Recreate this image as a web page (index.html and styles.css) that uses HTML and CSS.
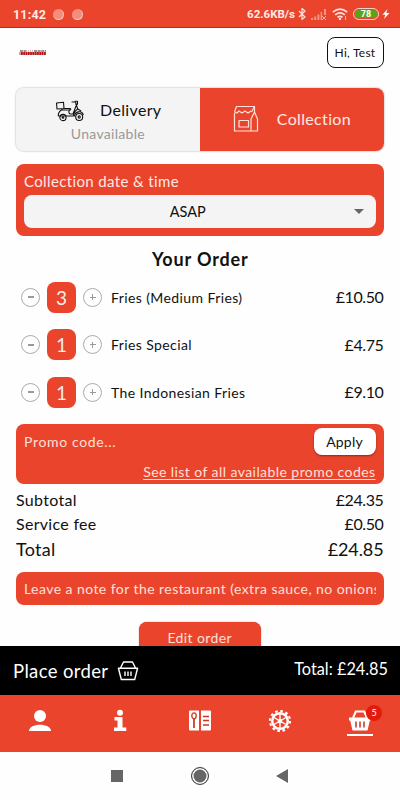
FILE: index.html
```html
<!DOCTYPE html>
<html lang="en">
<head>
<meta charset="UTF-8">
<meta name="viewport" content="width=device-width, initial-scale=1">
<title>Your Order</title>
<link rel="stylesheet" href="styles.css">
</head>
<body>
<div class="phone">
    <div class="status-bar">
        <span class="clock">11:42</span>
        <span class="dot"></span>
        <span class="dot"></span>
        <span class="speed">62.6KB/s</span>
        <svg class="bluetooth" viewBox="0 0 8 12"><path d="M1 3l6 6-3 2.5V.5L7 3 1 9" fill="none" stroke="#fde0da" stroke-width="1.2"/></svg>
        <svg class="signal" viewBox="0 0 16 11"><g fill="#f59482"><path d="M0 9h2v2H0zM3.200 7.500h2V11h-2zM6.400 5.500h2V11h-2zM9.600 3h1.500v8H9.600zM13 0h2v6h-2z"/></g><path d="M11 7l4 4M15 7l-4 4" stroke="#f8b0a2"/></svg>
        <svg class="wifi" viewBox="0 0 16 12"><g fill="none" stroke="#fde0da" stroke-width="1.700"><path d="M.8 4.200q7.200-6 14.400 0M3.200 6.900q4.800-4 9.600 0M5.500 9.400q2.500-2 5 0"/></g><circle cx="8" cy="11" r="1.200" fill="#fde0da"/><path d="M13.500 8v4" stroke="#f8b0a2"/></svg>
        <span class="battery"><span class="battery-level">78</span></span>
        <svg class="bolt" viewBox="0 0 8 10"><path d="M5.500 0L.5 5.800h2.800L2 10l5.500-6H4.300z" fill="#fff"/></svg>
    </div>

    <div class="content">
        <div class="header">
            <svg class="logo" viewBox="0 0 28 6">
                <path d="M1 1h6M15 1h12" stroke="#3c2626" stroke-width="1" stroke-dasharray="3 .6"/>
                <path d="M7 1h8" stroke="#c9756f" stroke-width="1" stroke-dasharray="1 1"/>
                <path d="M0 3.500h27" stroke="#e08c86" stroke-width="2.600"/>
                <path d="M2 3.500h25" stroke="#b3171d" stroke-width="2.800" stroke-dasharray="1.700 .6"/>
            </svg>
            <button class="user-btn">Hi, Test</button>
        </div>

        <div class="order-type">
            <div class="type-option delivery">
                <div class="type-row">
                    <svg class="scooter" viewBox="0 0 30 22">
                        <g fill="none" stroke="#111" stroke-width="1.100" stroke-linejoin="round" stroke-linecap="round">
                            <path d="M1.500 3l7-.8.5 6.300-7 .5zM9 8.500h6c1 0 1 1.300 0 1.500H7"/>
                            <path d="M7 9.500c-3 2-4 4-3.700 6.500H18.500c.3-3 2-5.500 4.200-7L20.500 2H17M14.500 10c-1.500 2.500 0 4 1 4h2.500L21 6"/>
                            <path d="M20 1.200h2.500v3h-1.500M22.700 9l3 1.800M19.500 16c.5-4.500 7-6 8.700-1.500"/>
                            <circle cx="8" cy="17.500" r="3.100"/><circle cx="24.200" cy="17" r="3.500"/>
                            <circle cx="8" cy="17.500" r=".8"/><circle cx="24.200" cy="17" r="1.100"/>
                        </g>
                    </svg>
                    <span class="type-name">Delivery</span>
                </div>
                <span class="unavailable">Unavailable</span>
            </div>
            <div class="type-option collection">
                <svg class="bag" viewBox="0 0 26 28">
                    <g fill="none" stroke="#fde3dc" stroke-width="1.200" stroke-linejoin="round">
                        <path d="M1.500 8v18h23V14L21.500 7 18 14v12M3.500 1.500h18V7M1.500 7l2-5.500"/>
                        <path d="M1.500 7l2.500 1 2-2 3 2 3-2 3 2 3-2M21.500 1.500L18.500 7M6 15.500h9.500v6.500H6z"/>
                    </g>
                </svg>
                <span class="type-name">Collection</span>
            </div>
        </div>

        <div class="date-box">
            <label class="date-label">Collection date &amp; time</label>
            <div class="date-select"><span>ASAP</span><i class="arrow"></i></div>
        </div>

        <h1 class="title">Your Order</h1>

        <div class="items">
            <div class="item">
                <button class="round minus"></button>
                <span class="qty">3</span>
                <button class="round plus"></button>
                <span class="item-name">Fries (Medium Fries)</span>
                <span class="price">£10.50</span>
            </div>
            <div class="item">
                <button class="round minus"></button>
                <span class="qty">1</span>
                <button class="round plus"></button>
                <span class="item-name">Fries Special</span>
                <span class="price">£4.75</span>
            </div>
            <div class="item">
                <button class="round minus"></button>
                <span class="qty">1</span>
                <button class="round plus"></button>
                <span class="item-name">The Indonesian Fries</span>
                <span class="price">£9.10</span>
            </div>
        </div>

        <div class="promo">
            <div class="promo-row">
                <span class="promo-input">Promo code...</span>
                <button class="apply">Apply</button>
            </div>
            <a class="promo-link">See list of all available promo codes</a>
        </div>

        <div class="totals">
            <div class="line"><span>Subtotal</span><span class="amount">£24.35</span></div>
            <div class="line"><span>Service fee</span><span class="amount">£0.50</span></div>
            <div class="line total"><span>Total</span><span class="amount">£24.85</span></div>
        </div>

        <div class="note"><div class="note-text">Leave a note for the restaurant (extra sauce, no onions</div></div>

        <button class="edit">Edit order</button>
    </div>

    <div class="place-order">
        <span class="place-label">Place order</span>
        <svg class="basket" viewBox="0 0 22 20">
            <g fill="none" stroke="#fff" stroke-width="1.400" stroke-linejoin="round">
                <path d="M.8 7.200h20.400M1.500 7.500l2.800 11h13.400l2.800-11M3.500 7l3-6h9l3 6M8 10.500V15M11 10.500V15M14 10.500V15"/>
            </g>
        </svg>
        <span class="place-total">Total: £24.85</span>
    </div>

    <div class="tabs">
        <div class="tab"><svg class="icon" viewBox="0 0 24 24"><g fill="#fff"><circle cx="12" cy="7" r="6"/><path d="M1 22c0-8.500 22-8.500 22 0z"/></g></svg></div>
        <div class="tab"><svg class="icon" viewBox="0 0 24 24"><g fill="#fff"><circle cx="12" cy="3.800" r="3"/><path d="M6.500 8h8v10.500h3.800V22H6v-3.500h3.500V11.500h-3z"/></g></svg></div>
        <div class="tab">
            <svg class="icon" viewBox="0 0 24 24">
                <path d="M1 2.500q0-1 1-1h9v20H2q-1 0-1-1zM13 1.500h9q1 0 1 1v18q0 1-1 1h-9z" fill="#fff"/>
                <ellipse cx="6" cy="6.800" rx="2.200" ry="3" fill="#fff" stroke="#c93420" stroke-width="1.300"/>
                <path d="M6 10v9M15 7.500h6M15 11.500h6M15 16h6" stroke="#c93420" stroke-width="1.700"/>
            </svg>
        </div>
        <div class="tab">
            <svg class="icon" viewBox="0 0 24 24">
                <g fill="none" stroke="#fff">
                    <circle cx="12" cy="12" r="10" stroke-width="2.200" stroke-dasharray="2.618 2.618"/>
                    <circle cx="12" cy="12" r="7.800" stroke-width="2.500"/>
                    <path d="M12 5v14M6 8.500l12 7M18 8.500l-12 7" stroke-width="1.400"/>
                </g>
                <circle cx="12" cy="12" r="2.300" fill="#fff"/>
            </svg>
        </div>
        <div class="tab active">
            <svg class="icon" viewBox="0 0 24 24">
                <path d="M5 9l2.800-6.500h8.400L19 9" fill="none" stroke="#fff" stroke-width="2"/>
                <path d="M1 8.500h22v3h-1.200L19.500 21.500h-15L2.200 11.500H1z" fill="#fff"/>
                <path d="M8 12.500v6M12 12.500v6M16 12.500v6" stroke="#c93420" stroke-width="1.500"/>
            </svg>
            <span class="badge">5</span>
        </div>
    </div>

    <div class="system-nav">
        <span class="square"></span>
        <span class="home"></span>
        <svg class="back" viewBox="0 0 12 14"><path d="M12 0v14L0 7z" fill="#666"/></svg>
    </div>
</div>
</body>
</html>
```
FILE: styles.css
```css
* {
    margin: 0;
    padding: 0;
    box-sizing: border-box;
}

body {
    background: #fefefe;
    color: #111;
    font-family: 'Lato', sans-serif;
}

button {
    border: none;
    background: none;
    font-family: inherit;
    color: inherit;
}

.phone {
    width: 400px;
    height: 800px;
    display: flex;
    flex-direction: column;
    overflow: hidden;
}

.status-bar {
    height: 28px;
    flex: none;
    background: #eb442c;
    border-bottom: 1px solid #b92a18;
    display: flex;
    align-items: center;
    padding: 1px 10px 0 13px;
    color: #fdeae6;
    font-family: 'Roboto', sans-serif;
    font-weight: bold;
}

.clock {
    width: 34px;
    margin-right: 6px;
    font-size: 12.5px;
    letter-spacing: 0.2px;
}

.dot {
    width: 11px;
    height: 11px;
    margin-right: 8px;
    border-radius: 50%;
    background: #f58d7d;
    border-right: 1px solid #fac5bb;
    border-bottom: 1px solid #fac5bb;
}

.speed {
    margin-left: auto;
    font-size: 11.5px;
}

.bluetooth {
    width: 8px;
    height: 12px;
    margin-left: 3px;
}

.signal {
    width: 16px;
    height: 11px;
    margin-left: 5px;
}

.wifi {
    width: 16px;
    height: 12px;
    margin-left: 5px;
}

.battery {
    width: 26px;
    height: 12px;
    margin-left: 5px;
    border: 1px solid #fbd3ca;
    border-radius: 6px;
    padding: 1px;
}

.battery-level {
    display: block;
    height: 8px;
    border-radius: 4px;
    background: #58a618;
    color: #fff;
    font-size: 9px;
    line-height: 9px;
    text-align: center;
}

.bolt {
    width: 8px;
    height: 10px;
    margin-left: 3px;
}

.content {
    height: 618px;
    flex: none;
    overflow: hidden;
    padding: 0 16.5px 0 16px;
    display: flex;
    flex-direction: column;
}

.header {
    height: 59.5px;
    flex: none;
    display: flex;
    justify-content: space-between;
    align-items: flex-start;
    padding: 9px 0 0 3px;
}

.logo {
    width: 28px;
    height: 6px;
    margin-top: 13px;
}

.user-btn {
    width: 57px;
    height: 31px;
    border: 1px solid #111;
    border-radius: 8px;
    background: #fff;
    font-size: 12px;
    letter-spacing: 0.25px;
}

.order-type {
    height: 63px;
    flex: none;
    display: flex;
    border-radius: 8px;
    overflow: hidden;
    box-shadow: 0 0 2px rgba(0, 0, 0, 0.4);
}

.type-option {
    width: 50%;
    display: flex;
    align-items: center;
}

.delivery {
    background: #f4f4f4;
    flex-direction: column;
    padding-top: 12px;
}

.collection {
    background: #eb442c;
    color: #fde9e4;
    padding-left: 33px;
}

.type-row {
    display: flex;
    align-items: center;
    height: 22px;
    align-self: flex-start;
    padding-left: 39px;
}

.scooter {
    width: 30px;
    height: 22px;
    margin-right: 15px;
}

.type-name {
    padding-bottom: 2px;
    font-size: 16px;
    letter-spacing: 0.35px;
}

.bag {
    width: 26px;
    height: 28px;
    margin-right: 18px;
}

.unavailable {
    color: #999;
    font-size: 14px;
    line-height: 18px;
    margin-top: 3px;
    letter-spacing: 0.3px;
}

.date-box {
    height: 71.5px;
    flex: none;
    margin-top: 13.5px;
    padding: 7px 8px;
    border-radius: 8px;
    background: #eb442c;
    color: #fde9e4;
}

.date-label {
    display: block;
    font-size: 15px;
    line-height: 20px;
    letter-spacing: 0.37px;
}

.date-select {
    height: 33px;
    margin-top: 4px;
    border-radius: 8px;
    background: #f4f4f4;
    color: #111;
    display: flex;
    align-items: center;
    justify-content: center;
    padding: 0 0 1px 48px;
    font-size: 14.5px;
}

.date-select span {
    flex: 1;
    text-align: center;
}

.arrow {
    margin: 1px 12px 0 50px;
    border: 5px solid transparent;
    border-top-color: #666;
    border-bottom: none;
}

.title {
    flex: none;
    margin-top: 12px;
    padding-left: 1px;
    font-size: 18px;
    line-height: 22px;
    text-align: center;
    letter-spacing: 0.85px;
}

.items {
    flex: none;
    margin-top: 4px;
}

.item {
    height: 47.5px;
    display: flex;
    align-items: center;
    padding-left: 5px;
}

.round {
    position: relative;
    width: 19px;
    height: 19px;
    border: 1px solid #aaa;
    border-radius: 50%;
}

.round::before {
    content: "";
    position: absolute;
    left: 5.5px;
    top: 7.5px;
    width: 6px;
    height: 2px;
    background: #999;
}

.plus::before {
    height: 1px;
    top: 8px;
}

.plus::after {
    content: "";
    position: absolute;
    left: 8px;
    top: 5.5px;
    width: 1px;
    height: 6px;
    background: #999;
}

.qty {
    width: 29px;
    height: 31px;
    margin: 0 7px;
    border-radius: 8px;
    background: #eb442c;
    color: #fdeeea;
    font-size: 19px;
    line-height: 31px;
    text-align: center;
}

.item-name {
    margin-left: 9px;
    font-size: 14px;
    letter-spacing: 0.4px;
}

.price {
    margin-left: auto;
    padding-bottom: 1px;
    font-size: 16px;
    letter-spacing: -0.4px;
}

.promo {
    height: 60px;
    flex: none;
    margin-top: 8px;
    padding: 4px 8px 0;
    border-radius: 8px;
    background: #eb442c;
    color: #fde0d9;
}

.promo-row {
    display: flex;
    justify-content: space-between;
    align-items: center;
    height: 27px;
}

.promo-input {
    padding-bottom: 1px;
    font-size: 14px;
    letter-spacing: 0.65px;
}

.apply {
    width: 62px;
    height: 27px;
    padding-bottom: 1px;
    border-radius: 8px;
    background: #fff;
    color: #111;
    font-size: 14px;
    letter-spacing: 0.2px;
    box-shadow: 0 1px 2px rgba(0, 0, 0, 0.4);
}

.promo-link {
    display: block;
    margin-top: 8px;
    font-size: 14px;
    line-height: 18px;
    letter-spacing: 0.43px;
    text-align: right;
    text-decoration: underline;
    text-underline-offset: 2px;
    white-space: nowrap;
}

.totals {
    flex: none;
    margin-top: 4px;
}

.line {
    display: flex;
    justify-content: space-between;
    font-size: 16px;
    line-height: 24px;
    letter-spacing: 0.3px;
}

.amount {
    letter-spacing: -0.4px;
}

.total {
    font-size: 18px;
    line-height: 27px;
}

.total .amount {
    letter-spacing: -0.1px;
}

.note {
    height: 33px;
    flex: none;
    margin-top: 8.5px;
    padding: 0 8px;
    border-radius: 8px;
    background: #eb442c;
    color: #fde0d9;
}

.note-text {
    overflow: hidden;
    white-space: nowrap;
    font-size: 14px;
    line-height: 33px;
    letter-spacing: 0.44px;
}

.edit {
    width: 122px;
    height: 33px;
    flex: none;
    align-self: center;
    margin-top: 17px;
    padding-bottom: 2px;
    border-radius: 8px;
    background: #eb442c;
    color: #fde0d9;
    font-size: 14px;
    letter-spacing: 0.4px;
    box-shadow: 0 0 1px #a02010;
}

.place-order {
    height: 49px;
    flex: none;
    background: #000;
    color: #fff;
    display: flex;
    align-items: center;
    padding: 0 12px 0 13px;
}

.place-label {
    font-size: 18.5px;
    letter-spacing: 0.35px;
}

.basket {
    width: 22px;
    height: 20px;
    margin-left: 9px;
}

.place-total {
    margin-left: auto;
    margin-top: -5px;
    font-size: 16.3px;
}

.tabs {
    height: 57px;
    flex: none;
    background: #eb442c;
    display: flex;
}

.tab {
    position: relative;
    flex: 1;
    display: flex;
    justify-content: center;
    padding-top: 14px;
}

.icon {
    width: 24px;
    height: 24px;
}

.active::after {
    content: "";
    position: absolute;
    left: 27px;
    top: 39px;
    width: 26px;
    height: 2px;
    background: #fff;
}

.badge {
    position: absolute;
    left: 46px;
    top: 10px;
    width: 16px;
    height: 16px;
    border-radius: 50%;
    background: #e31b0c;
    color: #fff;
    font-size: 9px;
    line-height: 16px;
    text-align: center;
}

.system-nav {
    flex: 1;
    background: #fefefe;
    display: flex;
    align-items: center;
    padding-left: 111px;
}

.square {
    width: 12px;
    height: 12px;
    background: #666;
}

.home {
    width: 18px;
    height: 18px;
    margin-left: 68px;
    border: 1px solid #444;
    border-radius: 50%;
    background: #666;
    box-shadow: inset 0 0 0 1.5px #fff;
}

.back {
    width: 12px;
    height: 14px;
    margin-left: 67px;
}
```
